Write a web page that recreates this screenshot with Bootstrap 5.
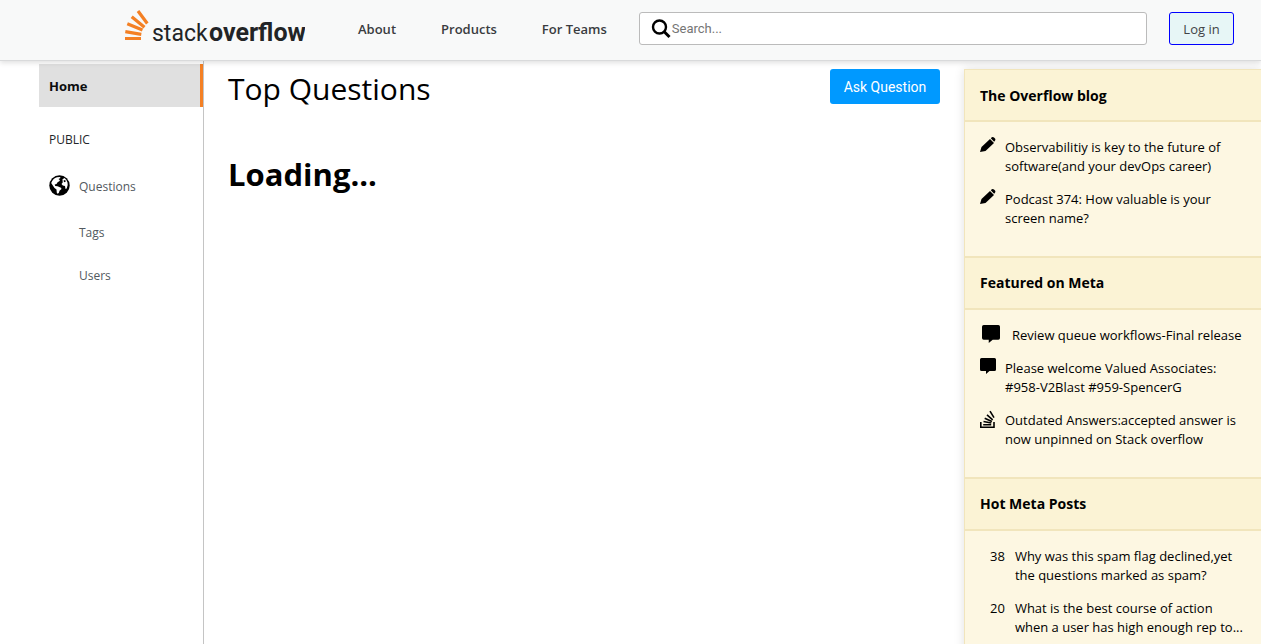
<!DOCTYPE html>
<html lang="en">
<head>
<meta charset="utf-8">
<meta name="viewport" content="width=device-width, initial-scale=1">
<title>Stack Overflow</title>
<link rel="stylesheet" href="https://cdn.jsdelivr.net/npm/bootstrap@5.3.0/dist/css/bootstrap.min.css">
<style>
  body { font-family: "Open Sans", sans-serif; font-size: 13px; line-height: 19px; color: #000; background: #fff; height: 100vh; overflow: hidden; }
  a { text-decoration: none; color: inherit; }
  .topbar { height: 61px; background: #f8f9f9; border-bottom: 1px solid #d9dadb; box-shadow: 0 2px 5px rgba(0,0,0,.12); z-index: 2; padding: 0 27px 3px 124px; }
  .brand { margin-right: 53px; }
  .top-links { gap: 45px; margin-right: 32px; padding-top: 1px; font-weight: 600; color: #3a3c3f; }
  .search-box { height: 33px; background: #fff; border: 1px solid #bbb; border-radius: 3px; padding-left: 11px; margin-right: 22px; }
  .search-box input { border: 0; outline: 0; padding: 0; background: transparent; font: 13px Roboto, sans-serif; }
  .search-box input::placeholder { color: #757575; opacity: 1; }
  .login { width: 65px; height: 33px; padding: 1px 0 0; border: 1px solid #00f; border-radius: 3px; background: #e7f6f6; color: #424447; font-size: 13px; font-weight: 500; }
  .side { width: 204px; padding: 3px 0 0 39px; border-right: 1px solid #c4c4c4; color: #525960; font-size: 12px; }
  .side a, .side .group-label { padding-left: 10px; }
  .side .home { height: 43px; padding-top: 2px; background: #e0e0e0; border-right: 3px solid #f48024; color: #0c0d0e; font-size: 13px; font-weight: 700; }
  .group-label { margin-top: 23px; color: #232629; }
  .side .questions { margin-top: 26px; gap: 9px; }
  .side .questions span { padding-top: 1px; }
  .side .sub { padding-left: 40px; margin-top: 24px; }
  .side .questions + .sub { margin-top: 27px; }
  .middle { padding: 8px 24px 0 24px; }
  .middle h1 { font-size: 30px; line-height: 39px; font-weight: 400; }
  .middle h2 { font-size: 31px; line-height: 40px; font-weight: 700; margin-top: 46px; }
  .ask { width: 110px; height: 35px; padding: 0; border: 0; border-radius: 3px; background: #0099ff; color: #fff; font: 400 14px Roboto, sans-serif; }
  .info { width: 297px; margin-top: 8px; background: #fdf7e2; border: 1px solid #f1e5bc; border-width: 1px 0 0 1px; box-shadow: 0 0 10px rgba(0,0,0,.12); }
  .info h3 { height: 54px; margin: 0; padding: 1px 15px 0; background: #fbf3d5; border: solid #f1e5bc; border-width: 2px 0; font-size: 14px; font-weight: 700; }
  .info h3.first { height: 52px; padding-top: 2px; border-top: 0; }
  .info ul { padding: 16px 0 28px 15px; gap: 14px; }
  .info li { gap: 9px; }
  .info svg { width: 16px; height: 16px; flex-shrink: 0; margin-top: -1px; }
  .info .wide-icon { padding-left: 2px; gap: 12px; }
  .info .wide-icon svg { width: 18px; height: 18px; }
  .info .hot { padding-left: 25px; }
  .info .hot li { gap: 10px; }
</style>
</head>
<body class="d-flex flex-column">
<header class="topbar d-flex align-items-center position-relative flex-shrink-0">
  <a class="brand" href="#" aria-label="Stack Overflow">
    <svg class="d-block" width="181" height="40" viewBox="0 0 181 40">
      <g stroke="#f48024" stroke-width="3.2" fill="none">
        <path d="M1 29.5h16M1.3 22.7l16 2.7M3.3 14.7l15.2 6.3M7.700 7.800l12.800 10.500M14 2l9.300 12.500"/>
      </g>
      <text x="28" y="32" font-family="Roboto" font-size="23" font-weight="400" fill="#222426">stack</text>
      <text x="85" y="32" font-family="Roboto" font-size="25" font-weight="700" fill="#222426">overflow</text>
    </svg>
  </a>
  <nav class="top-links d-flex text-nowrap">
    <a href="#">About</a><a href="#">Products</a><a href="#">For Teams</a>
  </nav>
  <label class="search-box d-flex align-items-center flex-grow-1">
    <svg width="21" height="21" viewBox="0 0 21 21" fill="none" stroke="#000"><circle cx="8.500" cy="9" r="6.500" stroke-width="2.400"/><path d="M13 13.500l5.500 5.500" stroke-width="3"/></svg>
    <input class="flex-grow-1" type="text" placeholder="Search..." aria-label="Search">
  </label>
  <button class="login" type="button">Log in</button>
</header>
<div class="d-flex flex-grow-1">
  <nav class="side flex-shrink-0">
    <a class="home d-flex align-items-center" href="#">Home</a>
    <div class="group-label">PUBLIC</div>
    <a class="questions d-flex align-items-center" href="#">
      <svg width="21" height="21" viewBox="0 0 21 21"><circle cx="10.500" cy="10.500" r="10.200" fill="#000"/><path fill="#fff" d="M2.200 8Q3.800 3.500 8 2.200l3-.2.500 1-2 1 1.500 1.300-1 1.200-1.200.5L7.500 9l-1.800.5.5 1.500 2.300.3 3.500 1.500.5 1.200-2 1.800-.7 2.200-1.300.8-.7-1-.3-3.300-2-1.500L3.500 10zM13.500 4.200l2-1.200q2.300 1.800 3 4.500l.2 2.500-1 3.500-1.200.5-.5-3-2.200-.5-1.300-1.500 1.200-1.500z"/><path d="M14.500 5.500l1.700-.5.6 1.500-1.700.8z"/></svg>
      <span>Questions</span></a>
    <a class="sub d-block" href="#">Tags</a>
    <a class="sub d-block" href="#">Users</a>
  </nav>
  <main class="middle flex-grow-1">
    <div class="d-flex justify-content-between align-items-start">
      <h1 class="m-0">Top Questions</h1>
      <button class="ask" type="button">Ask Question</button>
    </div>
    <h2>Loading...</h2>
  </main>
  <aside class="info flex-shrink-0">
    <h3 class="first d-flex align-items-center">The Overflow blog</h3>
    <ul class="list-unstyled m-0 d-flex flex-column">
      <li class="d-flex"><svg viewBox="0 0 16 16"><path d="M0 15l1.500-5L10 2l4 4-8.500 8zM10.800 1.200l1-.9Q13-.3 14 .5l1 1q.8 1 0 2.200l-.9 1z"/></svg><a href="#">Observabilitiy is key to the future of<br>software(and your devOps career)</a></li>
      <li class="d-flex"><svg viewBox="0 0 16 16"><path d="M0 15l1.500-5L10 2l4 4-8.500 8zM10.800 1.200l1-.9Q13-.3 14 .5l1 1q.8 1 0 2.200l-.9 1z"/></svg><a href="#">Podcast 374: How valuable is your<br>screen name?</a></li>
    </ul>
    <h3 class="d-flex align-items-center">Featured on Meta</h3>
    <ul class="list-unstyled m-0 d-flex flex-column">
      <li class="wide-icon d-flex"><svg viewBox="0 0 16 16"><path d="M1.500 0h13Q16 0 16 1.500v10q0 1.500-1.500 1.500H9.500L6 16v-3H1.500Q0 13 0 11.500v-10Q0 0 1.500 0z"/></svg><a href="#">Review queue workflows-Final release</a></li>
      <li class="d-flex"><svg viewBox="0 0 16 16"><path d="M1.500 0h13Q16 0 16 1.500v10q0 1.500-1.500 1.500H9.500L6 16v-3H1.500Q0 13 0 11.500v-10Q0 0 1.500 0z"/></svg><a href="#">Please welcome Valued Associates:<br>#958-V2Blast #959-SpencerG</a></li>
      <li class="d-flex"><svg viewBox="0 0 15 16" preserveAspectRatio="xMinYMin" overflow="visible"><path d="M.8 12v5.200h13.200V12M3.200 14.700h8M3.500 11.500l7.800 1.500M4.700 8.200l7.200 3.200M7 4.800l5.700 5M10 1.200l4 6.500" fill="none" stroke="#000" stroke-width="1.600"/></svg><a href="#">Outdated Answers:accepted answer is<br>now unpinned on Stack overflow</a></li>
    </ul>
    <h3 class="d-flex align-items-center">Hot Meta Posts</h3>
    <ul class="hot list-unstyled m-0 d-flex flex-column">
      <li class="d-flex"><span>38</span><a href="#">Why was this spam flag declined,yet<br>the questions marked as spam?</a></li>
      <li class="d-flex"><span>20</span><a href="#">What is the best course of action<br>when a user has high enough rep to...</a></li>
    </ul>
  </aside>
</div>
<script src="https://cdn.jsdelivr.net/npm/bootstrap@5.3.0/dist/js/bootstrap.bundle.min.js"></script>
</body>
</html>
